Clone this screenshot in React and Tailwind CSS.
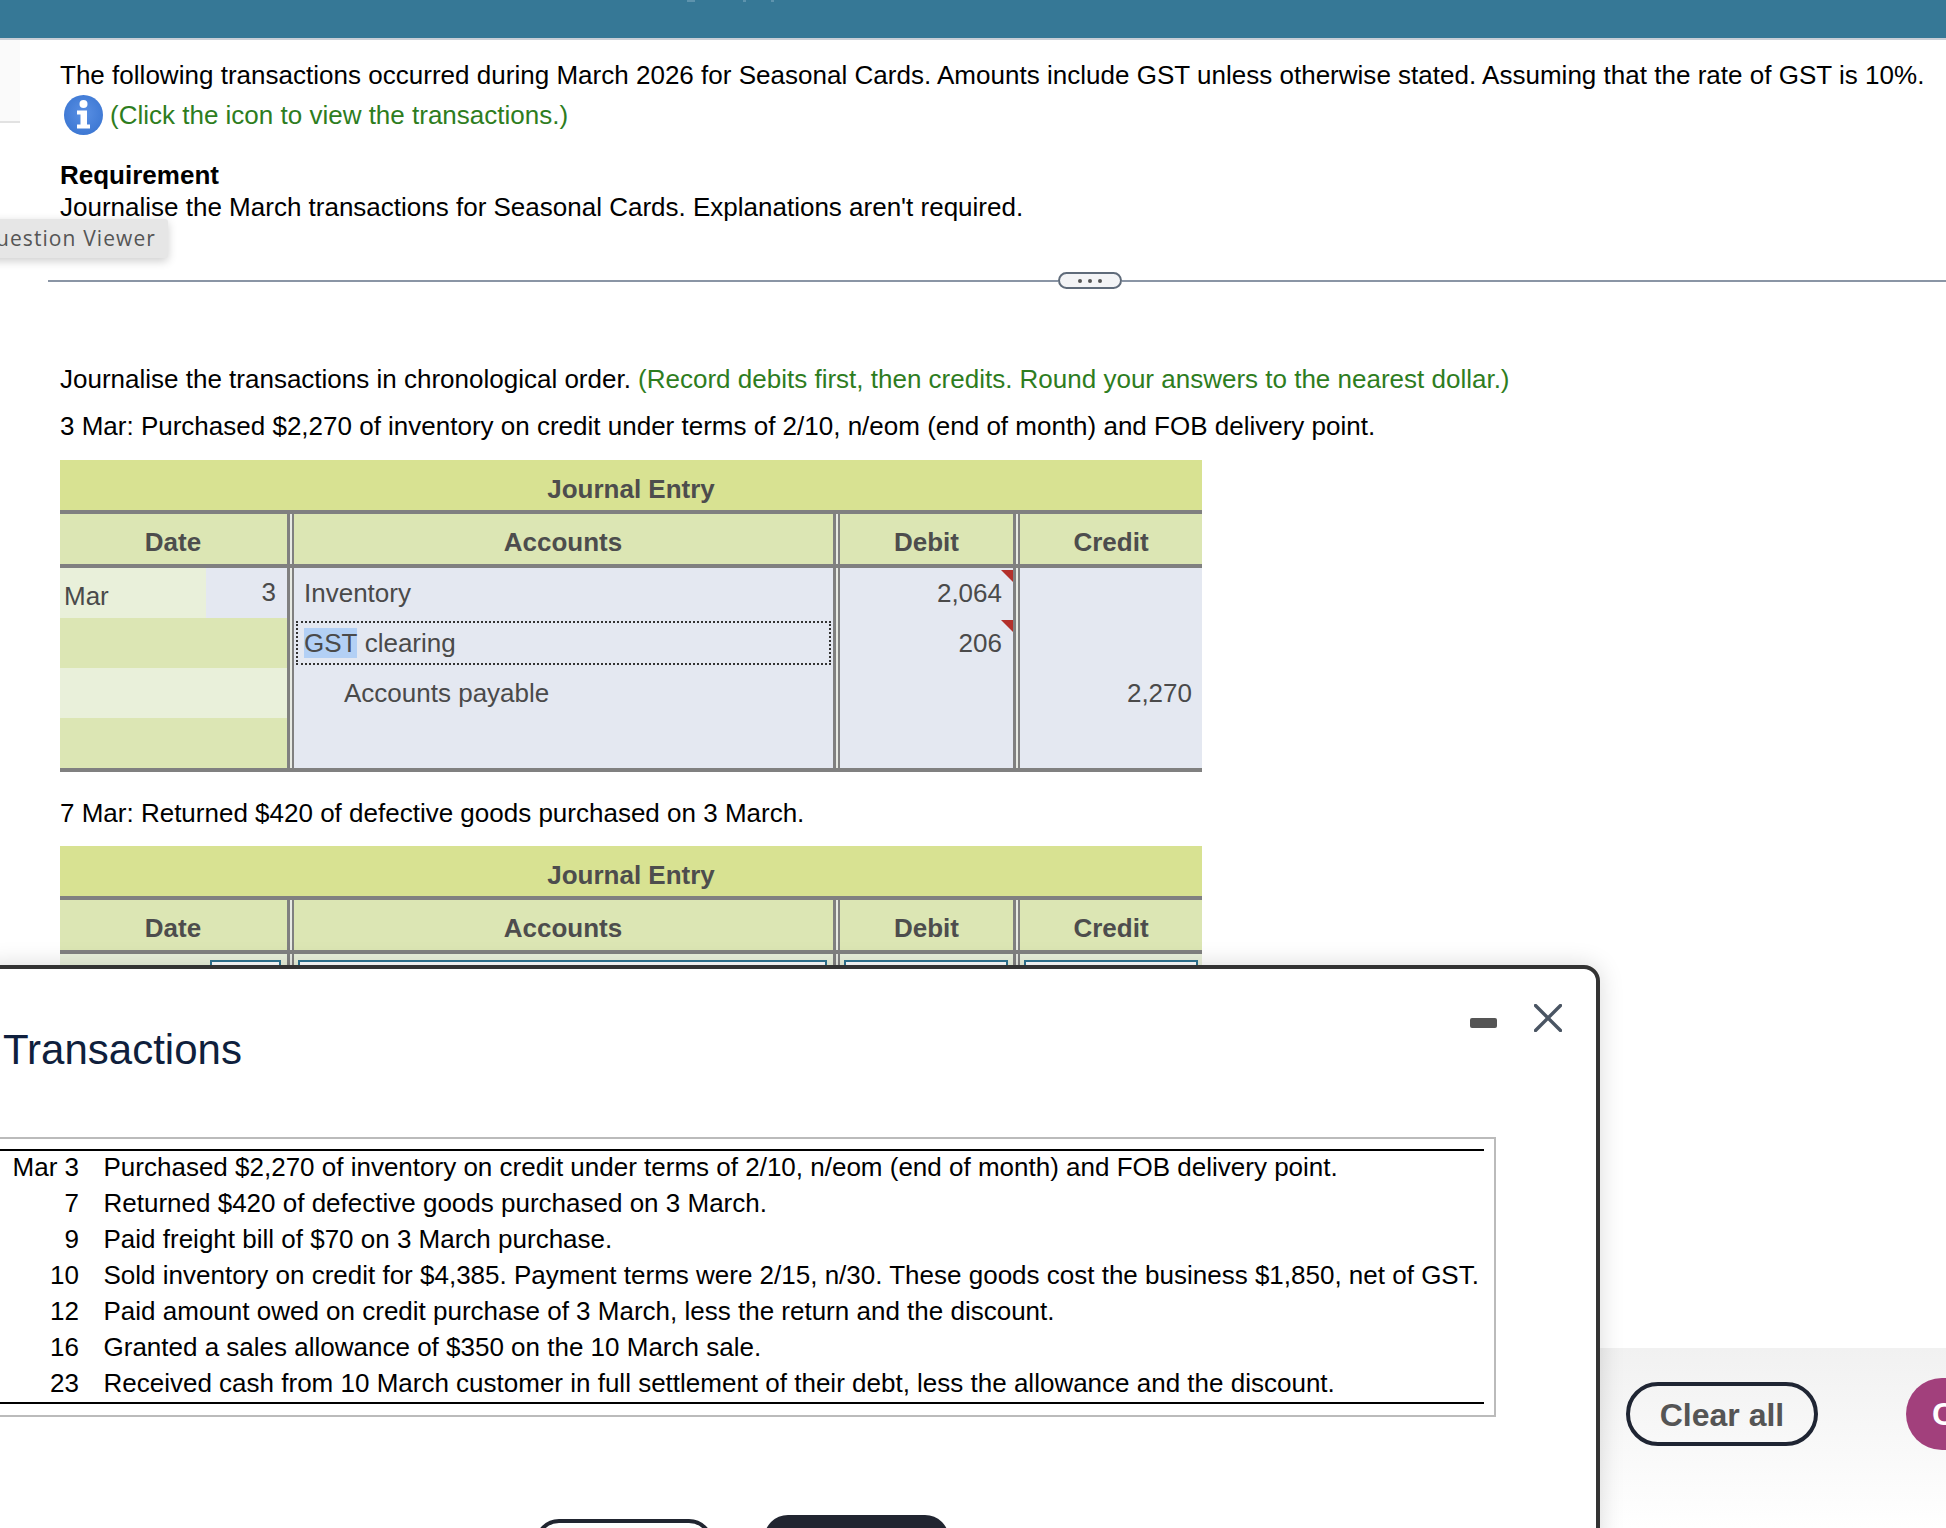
const Info = () => (
  <svg width="39" height="40" viewBox="0 0 39 40" className="shrink-0">
    <defs>
      <radialGradient id="ig" cx="50%" cy="45%" r="60%">
        <stop offset="0%" stopColor="#5a90e4" />
        <stop offset="100%" stopColor="#3b76d2" />
      </radialGradient>
    </defs>
    <ellipse cx="19.5" cy="20" rx="19.5" ry="20" fill="url(#ig)" />
    <circle cx="19.5" cy="9" r="4" fill="#fff" />
    <path d="M13 15.5h10v14h3v4H13v-4h3.5v-10H13z" fill="#fff" />
  </svg>
);

const cols = "grid grid-cols-[234px_546px_180px_182px]";
const dbl = "relative border-r-[7px] border-solid border-[#808080] after:absolute after:top-0 after:bottom-0 after:right-[-4.5px] after:w-[1.5px] after:bg-[#e8ebe4]";

function JournalHead() {
  return (
    <>
      <div className="h-[50px] pt-[8px] bg-[#d8e292] flex items-center justify-center font-bold text-[#4d4d4d]">Journal Entry</div>
      <div className="h-[4px] bg-[#808080]" />
      <div className={`${cols} font-bold text-[#4d4d4d] bg-[#dce6b4]`}>
        <div className={`h-[50px] pt-[7px] pr-[1px] flex items-center justify-center ${dbl}`}>Date</div>
        <div className={`h-[50px] pt-[7px] pr-[1px] flex items-center justify-center ${dbl}`}>Accounts</div>
        <div className={`h-[50px] pt-[7px] flex items-center justify-center ${dbl}`}>Debit</div>
        <div className="h-[50px] pt-[7px] flex items-center justify-center">Credit</div>
      </div>
      <div className="h-[4px] bg-[#808080]" />
    </>
  );
}

const Flag = () => (
  <div className="absolute top-[2px] right-0 w-[12px] h-[12px] bg-[#b3302b] [clip-path:polygon(0_0,100%_0,100%_100%)]" />
);

function Journal1() {
  const a = "h-[50px] bg-[#e4e8f1] flex items-center";
  return (
    <div className="w-[1142px] mt-[14px] text-[#4a4a4a]">
      <JournalHead />
      <div className={cols}>
        <div className={`h-[50px] flex ${dbl}`}>
          <div className="w-[146px] bg-[#e9f0da] pl-[4px] pt-[9px]">Mar</div>
          <div className="flex-1 bg-[#e4e8f1] text-right pr-[11px] pt-[5px]">3</div>
        </div>
        <div className={`${a} ${dbl} pl-[10px]`}>Inventory</div>
        <div className={`${a} ${dbl} justify-end pr-[11px]`}>2,064<Flag /></div>
        <div className={a} />

        <div className={`h-[50px] bg-[#dce6b4] ${dbl}`} />
        <div className={`${a} ${dbl} px-[2px]`}>
          <div className="w-full h-[44px] border-2 border-dotted border-[#333] flex items-center pl-[6px]">
            <span className="bg-[#b3d0f5] h-[30px] leading-[30px]">GST</span>&nbsp;clearing
          </div>
        </div>
        <div className={`${a} ${dbl} justify-end pr-[11px]`}>206<Flag /></div>
        <div className={a} />

        <div className={`h-[50px] bg-[#e9f0da] ${dbl}`} />
        <div className={`${a} ${dbl} pl-[50px]`}>Accounts payable</div>
        <div className={`${a} ${dbl}`} />
        <div className={`${a} justify-end pr-[10px]`}>2,270</div>

        <div className={`h-[50px] bg-[#dce6b4] ${dbl}`} />
        <div className={`${a} ${dbl}`} />
        <div className={`${a} ${dbl}`} />
        <div className={a} />
      </div>
      <div className="h-[4px] bg-[#808080]" />
    </div>
  );
}

function Journal2() {
  const box = "h-[40px] border-2 border-[#2f7390] bg-white";
  return (
    <div className="w-[1142px] mt-[13px] text-[#4a4a4a]">
      <JournalHead />
      <div className={cols}>
        <div className={`h-[50px] bg-[#e9f0da] pt-[6px] pl-[150px] ${dbl}`}>
          <div className={`${box} w-[71px]`} />
        </div>
        <div className={`h-[50px] bg-[#e9f0da] pt-[6px] pl-[4px] ${dbl}`}>
          <div className={`${box} w-[529px]`} />
        </div>
        <div className={`h-[50px] bg-[#e9f0da] pt-[6px] pl-[4px] ${dbl}`}>
          <div className={`${box} w-[164px]`} />
        </div>
        <div className="h-[50px] bg-[#e9f0da] pt-[6px] pl-[4px]">
          <div className={`${box} w-[174px]`} />
        </div>
      </div>
    </div>
  );
}

const rows = [
  ["Mar 3", "Purchased $2,270 of inventory on credit under terms of 2/10, n/eom (end of month) and FOB delivery point."],
  ["7", "Returned $420 of defective goods purchased on 3 March."],
  ["9", "Paid freight bill of $70 on 3 March purchase."],
  ["10", "Sold inventory on credit for $4,385. Payment terms were 2/15, n/30. These goods cost the business $1,850, net of GST."],
  ["12", "Paid amount owed on credit purchase of 3 March, less the return and the discount."],
  ["16", "Granted a sales allowance of $350 on the 10 March sale."],
  ["23", "Received cash from 10 March customer in full settlement of their debt, less the allowance and the discount."],
];

export default function App() {
  return (
    <div className="relative w-[1946px] h-[1528px] overflow-hidden bg-white text-[26px] text-black font-['Liberation_Sans',Arial,sans-serif] flex flex-col">
      <div className="relative h-[40px] shrink-0 bg-[#367896] border-b-2 border-[#c9ced6]">
        <span className="absolute left-[687px] top-0 w-[8px] h-[2px] bg-[#5d93ad]" />
        <span className="absolute left-[743px] top-0 w-[3px] h-[2px] bg-[#5d93ad]" />
        <span className="absolute left-[771px] top-0 w-[3px] h-[2px] bg-[#5d93ad]" />
      </div>

      <div className="relative flex-1 min-h-0 overflow-hidden pl-[60px] pt-[15px]">
        <div className="absolute left-0 top-0 w-[20px] h-[83px] bg-[#fafafa] border-b-2 border-[#e2e2e2]" />
        <div className="leading-[40px] whitespace-nowrap tracking-[0.016px]">
          The following transactions occurred during March 2026 for Seasonal Cards. Amounts include GST unless otherwise stated. Assuming that the rate of GST is 10%.
        </div>
        <div className="h-[40px] flex items-center pl-[4px] text-[#2e7d1e] whitespace-nowrap">
          <Info />
          <span className="ml-[7px] leading-[40px]">(Click the icon to view the transactions.)</span>
        </div>
        <div className="mt-[24px] font-bold leading-[32px]">Requirement</div>
        <div className="leading-[32px]">Journalise the March transactions for Seasonal Cards. Explanations aren't required.</div>

        <div className="mt-[49px] -ml-[12px] flex items-center h-[17px]">
          <div className="w-[1010px] h-[2px] bg-[#8a95a5]" />
          <div className="w-[64px] h-[17px] rounded-full border-2 border-[#5f6b7a] bg-[#f3f4f6] flex items-center justify-center gap-[6px]">
            <span className="w-[4px] h-[4px] rounded-full bg-[#555]" />
            <span className="w-[4px] h-[4px] rounded-full bg-[#555]" />
            <span className="w-[4px] h-[4px] rounded-full bg-[#555]" />
          </div>
          <div className="flex-1 h-[2px] bg-[#8a95a5]" />
        </div>

        <div className="mt-[70px] leading-[40px] whitespace-nowrap">
          Journalise the transactions in chronological order. <span className="text-[#2e7d1e]">(Record debits first, then credits. Round your answers to the nearest dollar.)</span>
        </div>
        <div className="mt-[7px] leading-[40px] whitespace-nowrap">3 Mar: Purchased $2,270 of inventory on credit under terms of 2/10, n/eom (end of month) and FOB delivery point.</div>
        <Journal1 />
        <div className="mt-[21px] leading-[40px]">7 Mar: Returned $420 of defective goods purchased on 3 March.</div>
        <Journal2 />

        <div className="absolute left-[-30px] top-[179px] w-[198px] h-[39px] pr-[12px] bg-[#e6e6e6] rounded-[3px] shadow-[0_3px_10px_rgba(0,0,0,0.2)] flex items-center justify-end text-[21px] text-[#555] tracking-[1.1px] font-['Open_Sans',sans-serif] whitespace-nowrap">
          Question Viewer
        </div>
      </div>

      <div className="h-[180px] shrink-0 bg-gradient-to-b from-[#f1f1f1] to-white flex items-start gap-[88px] pl-[1626px] pt-[30px]">
        <button className="shrink-0 w-[192px] h-[64px] mt-[4px] pt-[1px] rounded-full border-4 border-[#1f2533] text-[32px] font-bold text-[#555]">Clear all</button>
        <button className="shrink-0 w-[240px] h-[72px] rounded-full bg-[#a2407c] text-[32px] font-bold text-white text-left pl-[26px] whitespace-nowrap">Check answer</button>
      </div>

      <div className="absolute left-[-20px] top-[965px] w-[1620px] h-[600px] bg-white border-4 border-[#333] rounded-[16px] shadow-[0_0_24px_rgba(0,0,0,0.15)]">
        <div className="flex items-start">
          <h2 className="mt-[51px] pl-[19px] text-[42px] leading-[60px] text-[#0f1f3d]">Transactions</h2>
          <div className="ml-auto mt-[35px] mr-[34px] flex items-start gap-[37px]">
            <div className="mt-[14px] w-[27px] h-[10px] rounded-[2px] bg-[#555]" />
            <svg width="28" height="28" viewBox="0 0 28 28" fill="none" stroke="#4a5563" strokeWidth="3.4" strokeLinecap="round">
              <path d="M1.5 1.5l25 25M26.5 1.5l-25 25" />
            </svg>
          </div>
        </div>
        <div className="mt-[57px] w-[1512px] border-2 border-[#bbb] pr-[10px] pt-[10px] pb-[11px]">
          <div className="h-[255px] border-y-2 border-black">
            {rows.map(([d, t]) => (
              <div key={d} className="grid grid-cols-[93px_1fr] gap-x-[24.5px] leading-[32px] h-[36px] whitespace-nowrap">
                <div className="text-right">{d}</div>
                <div>{t}</div>
              </div>
            ))}
          </div>
        </div>
        <div className="mt-[98px] ml-[551px] flex items-start gap-[51px]">
          <button className="mt-[4px] w-[178px] h-[60px] rounded-[24px] border-4 border-[#212530] bg-white" />
          <button className="w-[185px] h-[64px] rounded-[24px] bg-[#212530]" />
        </div>
      </div>
    </div>
  );
}
